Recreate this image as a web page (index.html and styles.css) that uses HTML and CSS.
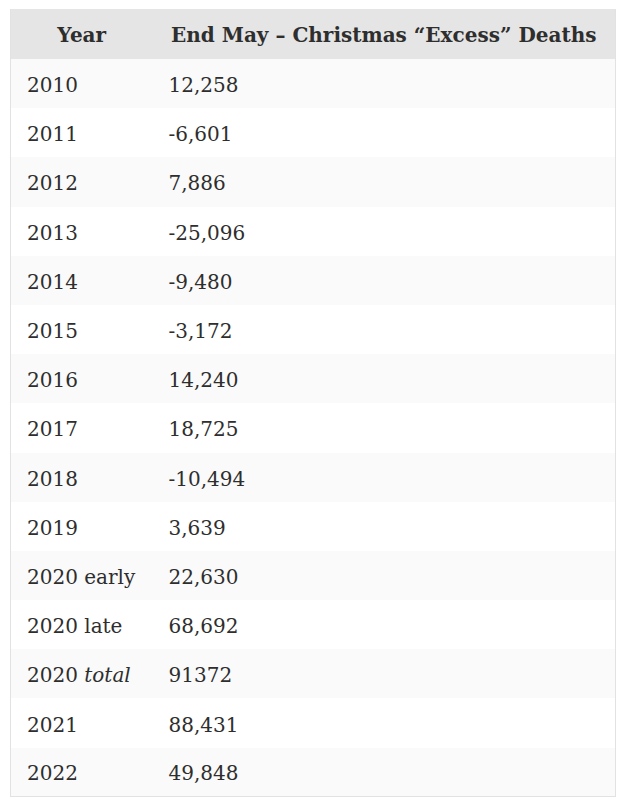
FILE: index.html
```html
<!DOCTYPE html>
<html>
<head>
<meta charset="utf-8">
<link rel="stylesheet" href="styles.css">
</head>
<body>
<table class="data">
  <thead>
    <tr><th class="c-year">Year</th><th class="c-val">End May – Christmas “Excess” Deaths</th></tr>
  </thead>
  <tbody>
    <tr><td>2010</td><td>12,258</td></tr>
    <tr><td>2011</td><td>-6,601</td></tr>
    <tr><td>2012</td><td>7,886</td></tr>
    <tr><td>2013</td><td>-25,096</td></tr>
    <tr><td>2014</td><td>-9,480</td></tr>
    <tr><td>2015</td><td>-3,172</td></tr>
    <tr><td>2016</td><td>14,240</td></tr>
    <tr><td>2017</td><td>18,725</td></tr>
    <tr><td>2018</td><td>-10,494</td></tr>
    <tr><td>2019</td><td>3,639</td></tr>
    <tr><td>2020 early</td><td>22,630</td></tr>
    <tr><td>2020 late</td><td>68,692</td></tr>
    <tr><td>2020 <em>total</em></td><td>91372</td></tr>
    <tr><td>2021</td><td>88,431</td></tr>
    <tr><td>2022</td><td>49,848</td></tr>
  </tbody>
</table>
</body>
</html>
```
FILE: styles.css
```css
html, body { margin: 0; padding: 0; background: #fff; }
body { padding: 9px 9px 0 10px; }
.data {
  width: 606px;
  border-collapse: collapse;
  table-layout: fixed;
  font-family: "DejaVu Serif", "Liberation Serif", serif;
  font-size: 20px;
  color: #2e2e2e;
  border: 1px solid #e2e2e2;
  border-top: none;
}
.c-year { width: 142px; }
.data th {
  background: #e5e5e5;
  font-weight: bold;
  font-size: 20px;
  text-align: center;
  height: 50px;
  padding: 2px 0 0 0;
  box-sizing: border-box;
  white-space: nowrap;
}
.data td {
  height: 49.2px;
  padding: 3px 0 0 16px;
  box-sizing: border-box;
  white-space: nowrap;
}
.data tbody tr:nth-child(odd) td { background: #fafafa; }
.data tbody tr:nth-child(even) td { background: #fff; }
```
